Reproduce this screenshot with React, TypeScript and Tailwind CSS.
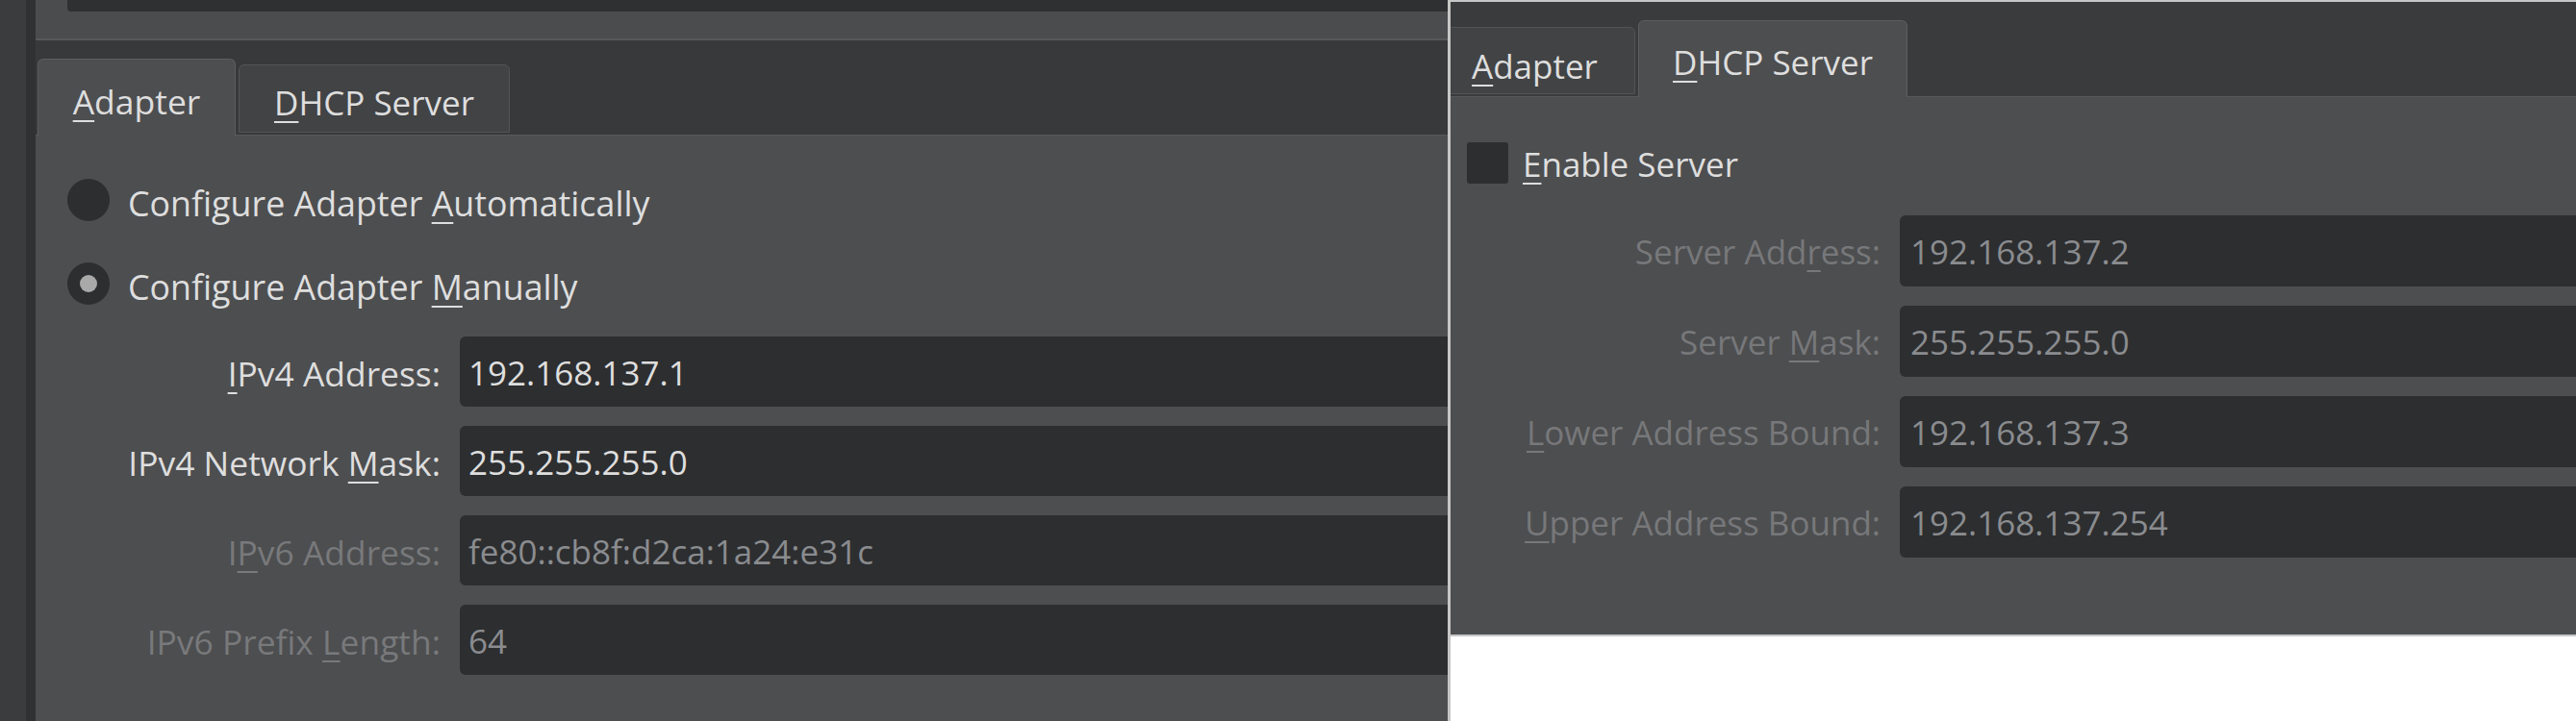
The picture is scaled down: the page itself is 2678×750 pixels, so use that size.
import React from "react";

function U({ children }: { children: React.ReactNode }) {
  return <span className="underline decoration-[2px] underline-offset-[6px]">{children}</span>;
}

function LeftRow({ label, value, disabled }: { label: React.ReactNode; value: string; disabled?: boolean }) {
  return (
    <div className="flex h-[73px] items-center">
      <div className={`w-[421px] shrink-0 pt-[2px] text-right text-[35.4px] leading-[48px] ${disabled ? "text-[#78797b]" : "text-[#dedede]"}`}>{label}</div>
      <div className={`ml-[20px] flex h-full w-[1200px] shrink-0 items-center rounded-[6px] bg-[#2d2e30] px-[9px] pt-[2px] leading-[48px] ${disabled ? "text-[#8a8c8f]" : "text-[#dedede]"}`}>
        {value}
      </div>
    </div>
  );
}

function RightRow({ label, value }: { label: React.ReactNode; value: string }) {
  return (
    <div className="flex h-[74px] items-center">
      <div className="w-[464px] shrink-0 pt-[2px] text-right leading-[48px] text-[#77787a]">{label}</div>
      <div className="ml-[20px] flex h-full w-[900px] shrink-0 items-center rounded-[6px] bg-[#2d2e30] px-[11px] pt-[2px] leading-[48px] text-[#8a8c8f]">
        {value}
      </div>
    </div>
  );
}

export default function App() {
  return (
    <div className="flex h-[750px] w-[2678px] overflow-hidden bg-white font-['Open_Sans',sans-serif] text-[35px]">
      {/* Left window */}
      <div className="flex h-full w-[1505px] shrink-0 overflow-hidden bg-[#4d4e50]">
        <div className="w-[27px] shrink-0 bg-[#3b3c3e]" />
        <div className="w-[10px] shrink-0 bg-[#303133]" />
        <div className="flex min-w-0 flex-1 flex-col">
          <div className="h-[42px] shrink-0 border-b-2 border-[#57585a] bg-[#4b4c4e] pl-[33px]">
            <div className="h-[12px] w-full rounded-bl-[4px] bg-[#2f3032]" />
          </div>
          <div className="flex h-[98px] shrink-0 items-end gap-[3px] bg-[#38393b] pl-[2px]">
            <div className="relative z-10 -mb-[1px] h-[80px] w-[206px] rounded-t-[6px] border border-b-0 border-[#5c5d5f] bg-[#4d4e50] pt-[19px] text-center text-[35.5px] leading-[48px] text-[#dedede]">
              <U>A</U>dapter
            </div>
            <div className="mb-[2px] h-[71px] w-[282px] rounded-t-[6px] border border-[#535456] bg-[#424345] pt-[15px] text-center leading-[48px] text-[#dedede]">
              <U>D</U>HCP Server
            </div>
          </div>
          <div className="flex flex-1 flex-col border-t border-[#58595b] bg-[#4d4e50] pt-[45px]">
            <div className="flex h-[44px] items-center pl-[33px]">
              <div className="h-[44px] w-[44px] shrink-0 rounded-full bg-[#2d2e30]" />
              <span className="ml-[19px] mt-[6px] text-[35.8px] leading-[48px] text-[#dedede]">
                Configure Adapter <U>A</U>utomatically
              </span>
            </div>
            <div className="mt-[43px] flex h-[44px] items-center pl-[33px]">
              <div className="flex h-[44px] w-[44px] shrink-0 items-center justify-center rounded-full bg-[#2d2e30]">
                <div className="h-[18px] w-[18px] rounded-full bg-[#a9a9a9]" />
              </div>
              <span className="ml-[19px] mt-[6px] text-[35.8px] leading-[48px] text-[#dedede]">
                Configure Adapter <U>M</U>anually
              </span>
            </div>
            <div className="mt-[33px] flex flex-col gap-[20px]">
              <LeftRow label={<><U>I</U>Pv4 Address:</>} value="192.168.137.1" />
              <LeftRow label={<>IPv4 Network <U>M</U>ask:</>} value="255.255.255.0" />
              <LeftRow label={<>I<U>P</U>v6 Address:</>} value="fe80::cb8f:d2ca:1a24:e31c" disabled />
              <LeftRow label={<>IPv6 Prefix <U>L</U>ength:</>} value="64" disabled />
            </div>
          </div>
        </div>
      </div>

      {/* divider */}
      <div className="h-full w-[3px] shrink-0 bg-[#c6c6c6]" />

      {/* Right window */}
      <div className="flex min-w-0 flex-1 flex-col bg-white">
        <div className="h-[662px] shrink-0 overflow-hidden border-y-2 border-[#c6c6c6] bg-[#4d4e50]">
          <div className="-ml-[17px] flex h-full flex-col">
            <div className="flex h-[98px] shrink-0 items-end gap-[3px] bg-[#3a3b3d]">
              <div className="mb-[2px] h-[70px] w-[209px] rounded-t-[6px] border border-[#535456] bg-[#424345] pt-[16px] text-center leading-[48px] text-[#dedede]">
                <U>A</U>dapter
              </div>
              <div className="relative z-10 -mb-[1px] h-[80px] w-[280px] rounded-t-[6px] border border-b-0 border-[#5c5d5f] bg-[#4d4e50] pt-[19px] text-center leading-[48px] text-[#dedede]">
                <U>D</U>HCP Server
              </div>
            </div>
            <div className="flex flex-1 flex-col border-t border-[#58595b] bg-[#4d4e50] pt-[47px]">
              <div className="flex h-[43px] items-center pl-[34px]">
                <div className="h-[43px] w-[43px] shrink-0 rounded-[3px] bg-[#2d2e30]" />
                <span className="ml-[15px] mt-[2px] leading-[48px] text-[#dedede]">
                  <U>E</U>nable Server
                </span>
              </div>
              <div className="mt-[33px] flex flex-col gap-[20px]">
                <RightRow label={<>Server Add<U>r</U>ess:</>} value="192.168.137.2" />
                <RightRow label={<>Server <U>M</U>ask:</>} value="255.255.255.0" />
                <RightRow label={<><U>L</U>ower Address Bound:</>} value="192.168.137.3" />
                <RightRow label={<><U>U</U>pper Address Bound:</>} value="192.168.137.254" />
              </div>
            </div>
          </div>
        </div>
        <div className="flex-1 bg-white" />
      </div>
    </div>
  );
}
